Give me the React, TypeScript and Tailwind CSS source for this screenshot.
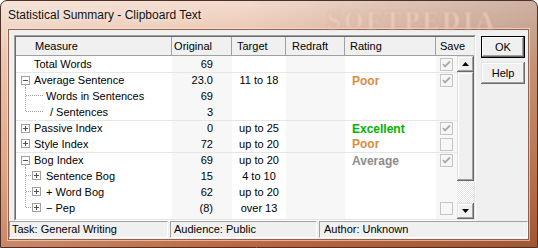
import React from 'react'

type Tree = 'none' | 'minus' | 'plus' | 'child' | 'childLast' | 'childPlus' | 'childPlusLast'

type Row = {
  label: string
  tree: Tree
  orig: string
  target?: string
  rating?: string
  ratingClass?: string
  save?: 'on' | 'off'
  sep?: boolean
  pad?: boolean
}

const rows: Row[] = [
  { label: 'Total Words', tree: 'none', orig: '69', save: 'on' },
  { label: 'Average Sentence', tree: 'minus', orig: '23.0', target: '11 to 18', rating: 'Poor', ratingClass: 'text-[#d98c40]', save: 'on', sep: true },
  { label: 'Words in Sentences', tree: 'child', orig: '69' },
  { label: '/ Sentences', tree: 'childLast', orig: '3', pad: true },
  { label: 'Passive Index', tree: 'plus', orig: '0', target: 'up to 25', rating: 'Excellent', ratingClass: 'text-[#00b400]', save: 'on', sep: true },
  { label: 'Style Index', tree: 'plus', orig: '72', target: 'up to 20', rating: 'Poor', ratingClass: 'text-[#d98c40]', save: 'off' },
  { label: 'Bog Index', tree: 'minus', orig: '69', target: 'up to 20', rating: 'Average', ratingClass: 'text-[#8c8c8c]', save: 'on', sep: true },
  { label: 'Sentence Bog', tree: 'childPlus', orig: '15', target: '4 to 10' },
  { label: '+ Word Bog', tree: 'childPlus', orig: '62', target: 'up to 20' },
  { label: '\u2212 Pep', tree: 'childPlusLast', orig: '(8)', target: 'over 13', save: 'off' },
]

const dot = { stroke: '#a0a0a0', strokeDasharray: '1 1' }

function TreeBox({ x, plus }: { x: number; plus: boolean }) {
  return (
    <g>
      <rect x={x + 0.5} y={3.5} width={8} height={8} fill="#fff" stroke="#a0a0a0" />
      <line x1={x + 2} y1={7.5} x2={x + 7} y2={7.5} stroke="#505050" />
      {plus && <line x1={x + 4.5} y1={5} x2={x + 4.5} y2={10} stroke="#505050" />}
    </g>
  )
}

function TreeGutter({ tree }: { tree: Tree }) {
  const child = tree.startsWith('child')
  const last = tree.endsWith('Last')
  const hasBox = tree.includes('Plus')
  return (
    <svg width={child ? 30 : 18} height={16} className="shrink-0" shapeRendering="crispEdges">
      {(tree === 'minus' || tree === 'plus') && <TreeBox x={5} plus={tree === 'plus'} />}
      {tree === 'minus' && <line x1={9.5} y1={12} x2={9.5} y2={16} {...dot} />}
      {child && <line x1={9.5} y1={0} x2={9.5} y2={last ? 8 : 16} {...dot} />}
      {child && <line x1={10} y1={7.5} x2={hasBox ? 16 : 28} y2={7.5} {...dot} />}
      {hasBox && <TreeBox x={16} plus />}
    </svg>
  )
}

function CheckBox({ on }: { on: boolean }) {
  return (
    <svg width={13} height={13} shapeRendering="crispEdges">
      <rect x={0.5} y={0.5} width={12} height={12} fill="#f7f7f7" stroke="#c4c4c4" />
      {on && (
        <polyline points="3,6 5,8.5 10,3.5" fill="none" stroke="#a8a8a8" strokeWidth={1.8} shapeRendering="auto" />
      )}
    </svg>
  )
}

const raised =
  'bg-[#f0f0f0] shadow-[inset_-1px_-1px_0_#696969,inset_1px_1px_0_#e3e3e3,inset_-2px_-2px_0_#a0a0a0,inset_2px_2px_0_#ffffff]'

function Arrow({ down }: { down?: boolean }) {
  return (
    <svg width={7} height={4}>
      <polygon points={down ? '0,0 7,0 3.5,4' : '0,4 7,4 3.5,0'} fill="#000" />
    </svg>
  )
}

export default function App() {
  return (
    <div className="w-[538px] h-[248px] overflow-hidden bg-white font-['Liberation_Sans',Arial,sans-serif] text-black">
      <div className="relative flex h-full w-full flex-col rounded-t-[7px] border border-[#4e3026] bg-[linear-gradient(to_right,rgba(255,255,255,0.22),transparent_45%,rgba(70,25,10,0.22)),linear-gradient(to_bottom,#f2dccf,#e6b597_25%,#d98a60_70%,#b9663f)]">
        {/* title bar */}
        <div className="relative flex h-[28px] shrink-0 items-center pl-[7px] text-[12px] text-[#111] [text-shadow:0_0_6px_rgba(255,255,255,0.9)]">
          Statistical Summary - Clipboard Text
          <span className="pointer-events-none absolute left-[326px] top-[1px] font-['Liberation_Serif',serif] text-[25px] font-bold tracking-[3px] text-[#f3d8cc] opacity-60 blur-[1.2px] [text-shadow:0_0_2px_#a86a58]">
            SOFTPEDIA
          </span>
        </div>

        {/* client area */}
        <div className="ml-[7px] mr-[8px] mb-[7px] flex flex-1 flex-col border border-[#8f6350] bg-[#f0f0f0] pb-[1px] shadow-[0_0_0_1px_rgba(255,230,215,0.6)]">
          <div className="flex gap-[5px] pl-[5px] pt-[5px]">
            {/* list view */}
            <div className="w-[462px] h-[186px] border border-t-[#a0a0a0] border-l-[#a0a0a0] border-b-white border-r-white">
              <div className="flex h-full flex-col border border-t-[#696969] border-l-[#696969] border-b-[#e3e3e3] border-r-[#e3e3e3] bg-white">
                {/* header */}
                <div className="flex h-[19px] shrink-0 bg-[#f0f0f0] text-[11px] leading-none">
                  <div className="flex w-[156px] items-center border-r border-b border-[#a0a0a0] pl-[19px]">Measure</div>
                  <div className="flex w-[60px] items-center justify-end border-r border-b border-[#a0a0a0] pr-[19px]">Original</div>
                  <div className="flex w-[54px] items-center border-r border-b border-[#a0a0a0] pl-[5px]">Target</div>
                  <div className="flex w-[59px] items-center border-r border-b border-[#a0a0a0] pl-[6px]">Redraft</div>
                  <div className="flex w-[91px] items-center border-r border-b border-[#a0a0a0] pl-[5px]">Rating</div>
                  <div className="flex w-[38px] items-center border-b border-[#a0a0a0] pl-[4px]">Save</div>
                </div>

                <div className="flex flex-1">
                  {/* rows */}
                  <div className="flex w-[441px] flex-col text-[11px] leading-none">
                    {rows.map((r) => (
                      <div key={r.label} className={`flex h-[16px] ${r.sep ? 'border-t border-[#e6e6e6]' : ''}`}>
                        <div className="flex w-[156px] items-center whitespace-nowrap">
                          <TreeGutter tree={r.tree} />
                          <span className={r.pad ? 'pl-[4px]' : ''}>{r.label}</span>
                        </div>
                        <div className="flex w-[60px] items-center justify-end bg-[#f7f7f7] pr-[19px]">{r.orig}</div>
                        <div className="flex w-[54px] items-center justify-center whitespace-nowrap">{r.target}</div>
                        <div className="w-[59px] bg-[#f7f7f7]" />
                        <div className={`flex w-[91px] items-center pl-[7px] text-[12px] font-bold ${r.ratingClass ?? ''}`}>
                          {r.rating}
                        </div>
                        <div className="flex w-[21px] items-center justify-center bg-[#f7f7f7]">
                          {r.save && <CheckBox on={r.save === 'on'} />}
                        </div>
                      </div>
                    ))}
                    <div className="flex flex-1">
                      <div className="w-[156px]" />
                      <div className="w-[60px] bg-[#f7f7f7]" />
                      <div className="w-[54px]" />
                      <div className="w-[59px] bg-[#f7f7f7]" />
                      <div className="w-[91px]" />
                      <div className="w-[21px] bg-[#f7f7f7]" />
                    </div>
                  </div>

                  {/* scrollbar */}
                  <div className="flex w-[17px] flex-col">
                    <div className={`flex h-[16px] items-center justify-center ${raised}`}>
                      <Arrow />
                    </div>
                    <div className={`h-[109px] ${raised}`} />
                    <div className="flex-1 bg-[image:repeating-conic-gradient(#e4e4e4_0%_25%,#ffffff_0%_50%)] bg-[length:2px_2px]" />
                    <div className={`flex h-[16px] items-center justify-center ${raised}`}>
                      <Arrow down />
                    </div>
                  </div>
                </div>
              </div>
            </div>

            {/* buttons */}
            <div className="flex flex-col gap-[4px] pt-[1px] text-[11px]">
              <button className="flex h-[22px] w-[44px] items-center justify-center border border-black bg-[#f0f0f0] shadow-[inset_-1px_-1px_0_#696969,inset_1px_1px_0_#ffffff,inset_-2px_-2px_0_#a0a0a0]">
                OK
              </button>
              <button className={`flex h-[22px] w-[44px] items-center justify-center ${raised}`}>Help</button>
            </div>
          </div>

          {/* status bar */}
          <div className="flex h-[17px] gap-[2px] text-[11px] leading-none">
            <div className="flex w-[159px] items-center border border-t-[#a0a0a0] border-l-[#a0a0a0] border-b-white border-r-white pl-[2px]">
              Task: General Writing
            </div>
            <div className="flex w-[147px] items-center border border-t-[#a0a0a0] border-l-[#a0a0a0] border-b-white border-r-white pl-[3px]">
              Audience: Public
            </div>
            <div className="flex flex-1 items-center border border-t-[#a0a0a0] border-l-[#a0a0a0] border-b-white border-r-white pl-[4px]">
              Author: Unknown
            </div>
          </div>
        </div>
      </div>
    </div>
  )
}
